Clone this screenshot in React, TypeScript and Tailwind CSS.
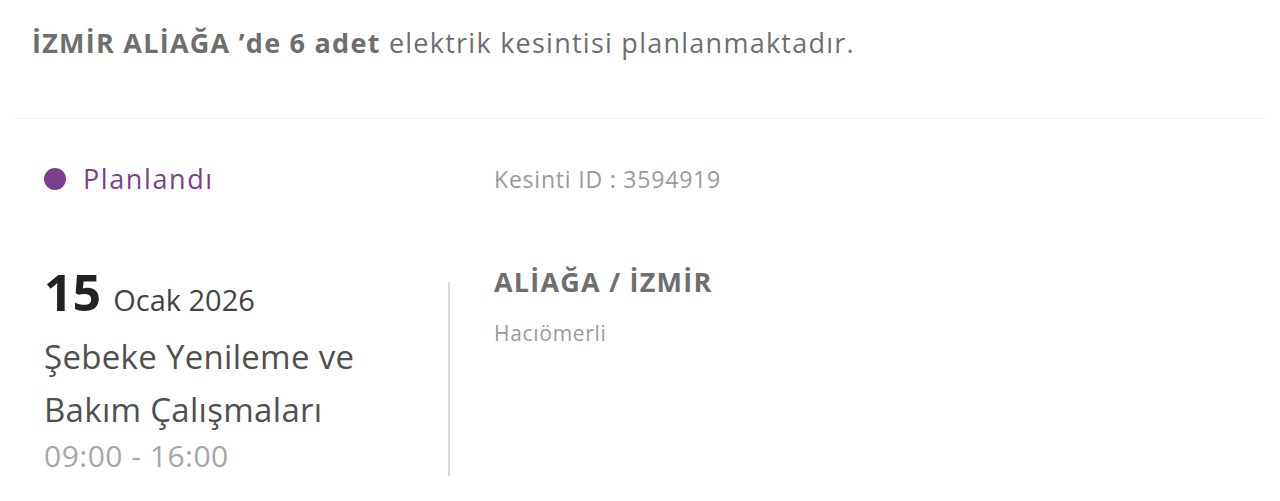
export default function App() {
  return (
    <div className="min-h-[501px] w-[1280px] bg-white font-['Open_Sans','Noto_Sans',sans-serif]">
      <div className="px-8 pt-[24px] pb-[56px]">
        <p className="text-[27px] leading-[38px] tracking-[1.25px] text-[#6e6e6e]">
          <span className="font-bold">İZMİR ALİAĞA ’de 6 adet</span> elektrik kesintisi planlanmaktadır.
        </p>
      </div>

      <div className="mx-[15px] border-t border-[#f3f3f3]">
        <div className="flex px-[29px] pt-[40px]">
          <div className="w-[450px]">
            <div className="flex items-center gap-[17px]">
              <span className="block h-[22px] w-[22px] rounded-full bg-[#7b3f8c]" />
              <span className="text-[27px] leading-[40px] tracking-[1.6px] text-[#7b3f8c]">Planlandı</span>
            </div>
          </div>
          <div className="text-[23px] leading-[40px] tracking-[0.8px] text-[#9a9a9a]">Kesinti ID : 3594919</div>
        </div>

        <div className="flex px-[29px] pt-[65px]">
          <div className="w-[404px]">
            <div className="flex items-baseline gap-[12px]">
              <span className="text-[50px] font-bold leading-[56px] text-[#222]">15</span>
              <span className="text-[29px] text-[#444]">Ocak 2026</span>
            </div>
            <p className="mt-[8px] w-[380px] text-[33px] leading-[53px] tracking-[0.3px] text-[#505050]">Şebeke Yenileme ve Bakım Çalışmaları</p>
            <p className="text-[30px] leading-[40px] tracking-[0.5px] text-[#a6a6a6]">09:00 - 16:00</p>
          </div>
          <div className="mt-[18px] h-[194px] w-[2px] bg-[#d9d9d9]" />
          <div className="pl-[44px] pt-[6px]">
            <p className="text-[27px] font-bold leading-[24px] tracking-[1.2px] text-[#6e6e6e]">ALİAĞA / İZMİR</p>
            <p className="mt-[24px] text-[21px] tracking-[0.7px] text-[#9a9a9a]">Hacıömerli</p>
          </div>
        </div>
      </div>
    </div>
  );
}
